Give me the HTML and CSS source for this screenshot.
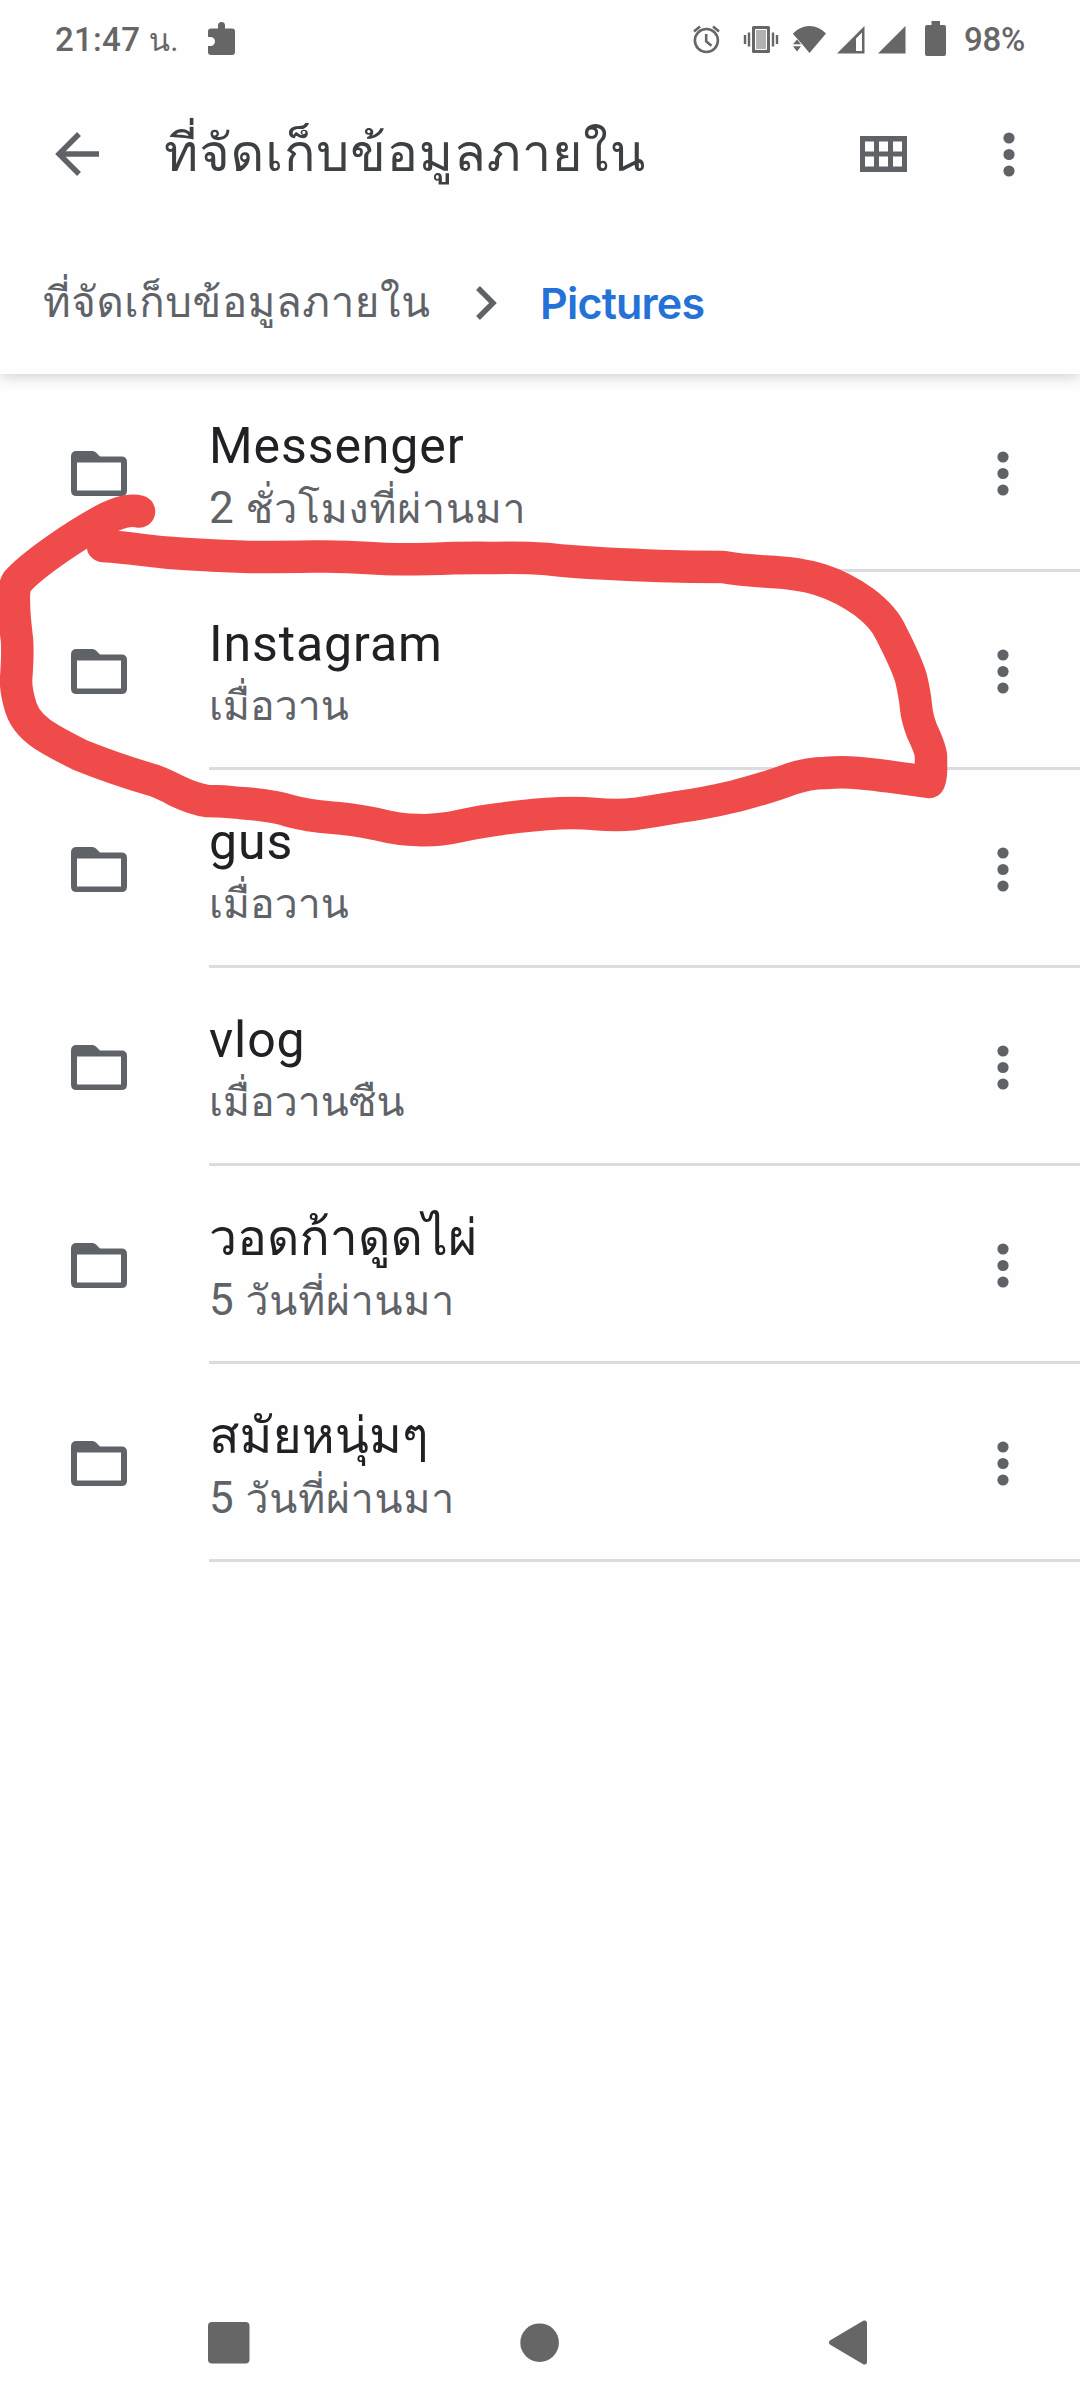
FILE: index.html
```html
<!DOCTYPE html>
<html lang="th">
<head>
<meta charset="utf-8">
<title>Pictures</title>
<link rel="stylesheet" href="styles.css">
</head>
<body>
<svg class="defs" width="0" height="0">
  <symbol id="folder" viewBox="0 0 56 45"><path fill-rule="evenodd" d="M5.500 0H21.500Q23.500 0 25 1.500L29 5.500H50.500Q56 5.500 56 11V39.500Q56 45 50.500 45H5.500Q0 45 0 39.500V5.500Q0 0 5.500 0ZM6 11.500V39.500H50V11.500Z"/></symbol>
  <symbol id="more" viewBox="0 0 12 45"><circle cx="6" cy="6" r="5.600"/><circle cx="6" cy="22.500" r="5.600"/><circle cx="6" cy="39" r="5.600"/></symbol>
</svg>
<div class="screen">
  <div class="status">
    <span class="clock">21:47 <span class="unit">น.</span></span>
    <svg class="puzzle" width="28" height="34" viewBox="0 0 28 34"><path d="M3 6.500H10V3.500A3.500 3.500 0 0 1 17 3.500V6.500H24Q27 6.500 27 9.500V30Q27 33 24 33H3Q0 33 0 30V24H2.500A4.500 4.500 0 0 0 2.500 15H0V9.500Q0 6.500 3 6.500Z"/></svg>
    <div class="status-right">
      <svg width="46" height="40" viewBox="686 18 46 40"><g fill="none" stroke="#666" stroke-width="2.600"><circle cx="706.400" cy="39.500" r="11.500"/><path d="M706.200 33V40.500L711.500 44.800M694 30.500L700 25.600M719 30.500L713 25.600"/></g></svg>
      <svg width="54" height="40" viewBox="732 18 54 40"><path d="M753.500 25H768.500Q770 25 770 26.500V50.500Q770 52 768.500 52H753.500Q752 52 752 50.500V26.500Q752 25 753.500 25Z"/><path fill="#b2b2b2" stroke="#fff" d="M755.500 28.500H766.500V48.500H755.500Z"/><path fill="none" stroke="#666" stroke-width="2.400" d="M745 34V43M749 31.500V45.500M773 31.500V45.500M777 34V43"/></svg>
      <svg width="46" height="40" viewBox="786 18 46 40"><path d="M793 32.500Q800 25 809.500 25T826 32.500L809.500 52L801.500 42.500L797.500 38L793.500 33.500ZM797 38.500L801 43.200H793ZM793 45.300H801L797 50.500Z"/></svg>
      <svg width="42" height="40" viewBox="832 18 42 40"><path fill-rule="evenodd" d="M837 52.500L864.500 25V52.500ZM856 37.500V50H862V31.500Z"/></svg>
      <svg width="41" height="40" viewBox="874 18 41 40"><path d="M878 52.500L905.500 25V52.500Z"/></svg>
      <svg width="49" height="40" viewBox="915 18 49 40"><path d="M931.500 20H940V24H944Q946 24 946 26V53Q946 55 944 55H927Q925 55 925 53V26Q925 24 927 24H931.500Z"/></svg>
      <span class="percent">98%</span>
    </div>
  </div>
  <header class="toolbar">
    <svg width="44" height="44" viewBox="0 0 44 44"><path fill="none" stroke="#5f6368" stroke-width="5.400" d="M44 22H4M24 2L4 22L24 42"/></svg>
    <h1 class="title">ที่จัดเก็บข้อมูลภายใน</h1>
    <svg class="grid" width="47" height="36" viewBox="0 0 47 36"><path fill-rule="evenodd" d="M0 0H47V36H0ZM5 5.500V15.500H14V5.500ZM19 5.500V15.500H28V5.500ZM33 5.500V15.500H42V5.500ZM5 20.500V30.500H14V20.500ZM19 20.500V30.500H28V20.500ZM33 20.500V30.500H42V20.500Z"/></svg>
    <svg width="12" height="45"><use href="#more"/></svg>
  </header>
  <nav class="crumbs">
    <span class="crumb">ที่จัดเก็บข้อมูลภายใน</span>
    <svg class="chevron" width="21" height="34" viewBox="0 0 21 34"><path fill="none" stroke="#5f6368" stroke-width="5.400" d="M2 2L17 17L2 32"/></svg>
    <span class="current">Pictures</span>
  </nav>
  <main class="list">
    <div class="row"><svg width="56" height="45"><use href="#folder"/></svg><div class="info"><div class="name">Messenger</div><div class="date ago"><span class="num">2</span> ชั่วโมงที่ผ่านมา</div></div><svg class="menu" width="12" height="45"><use href="#more"/></svg></div>
    <div class="row"><svg width="56" height="45"><use href="#folder"/></svg><div class="info"><div class="name">Instagram</div><div class="date">เมื่อวาน</div></div><svg class="menu" width="12" height="45"><use href="#more"/></svg></div>
    <div class="row"><svg width="56" height="45"><use href="#folder"/></svg><div class="info"><div class="name">gus</div><div class="date">เมื่อวาน</div></div><svg class="menu" width="12" height="45"><use href="#more"/></svg></div>
    <div class="row"><svg width="56" height="45"><use href="#folder"/></svg><div class="info"><div class="name">vlog</div><div class="date">เมื่อวานซืน</div></div><svg class="menu" width="12" height="45"><use href="#more"/></svg></div>
    <div class="row"><svg width="56" height="45"><use href="#folder"/></svg><div class="info"><div class="name thai">วอดก้าดูดไผ่</div><div class="date ago"><span class="num">5</span> วันที่ผ่านมา</div></div><svg class="menu" width="12" height="45"><use href="#more"/></svg></div>
    <div class="row"><svg width="56" height="45"><use href="#folder"/></svg><div class="info"><div class="name thai">สมัยหนุ่มๆ</div><div class="date ago"><span class="num">5</span> วันที่ผ่านมา</div></div><svg class="menu" width="12" height="45"><use href="#more"/></svg></div>
  </main>
  <footer class="navbar">
    <svg width="42" height="46" viewBox="0 0 42 46"><rect y="2" width="41.500" height="41.500" rx="4"/></svg>
    <svg width="40" height="46" viewBox="0 0 40 46"><circle cx="20.600" cy="22.700" r="19.300"/></svg>
    <svg width="40" height="46" viewBox="0 0 40 46"><path stroke="#666" stroke-width="5" stroke-linejoin="round" d="M3.500 22.500L36.500 3V42Z"/></svg>
  </footer>
  <svg class="scribble" width="1080" height="480" viewBox="0 450 1080 480"><path d="M103 546Q120 547 143 550Q165 553 186 554Q218 556 250 557Q286 557 314 556.500Q343 556 368 558Q393 560 428 559Q464 557.500 492 558Q520 557 547 559Q573 562 604 563.500Q634 565 660 566Q690 567 723 567Q740 570 765 571.500Q800 573 821 580Q843 587 864 602Q884 617 891 633Q906 662 911 678Q915 695 916 707Q917 718 922 731Q931 750 931 757L931 770Q931 777 929 782L896 777.500Q863 773 850 772.500Q838 772 825 773Q809 773 791 779Q770 787 736 796Q702 804 678 807Q655 811 635 814Q616 816 595 814Q574 812 547 814Q520 816 501 819Q483 821 460 826Q437 831 418 830Q400 830 376 824Q352 819 330 817.500Q309 816 290 811Q272 805 240 803Q224 801 207 801Q194 799 178 791.500Q158 781 149 779Q112 768 80 755Q60 745 50 739Q27 726 21 708Q16 692 16 680Q18 655 17 640Q14 615 14 605Q13 588 17 582Q27 570 57 549Q80 533 100 522Q125 508 139 511.500"/></svg>
</div>
</body>
</html>
```
FILE: styles.css
```css
body { margin: 0; background: #fefefe; font-family: Roboto, Loma, "Noto Sans Thai Looped", sans-serif; }
.defs { position: absolute; }
svg { display: block; flex: none; fill: #5f6368; }
.screen { position: relative; display: flex; flex-direction: column; width: 1080px; height: 2400px; overflow: hidden; background: #fefefe; }
.status { display: flex; align-items: center; height: 77px; padding: 0 54px 0 55px; color: #666; font-size: 33px; font-weight: 500; line-height: 40px; white-space: nowrap; }
.status svg, .navbar svg { fill: #666; }
.clock { width: 153px; padding-top: 3px; letter-spacing: 0.3px; }
.unit { font-size: 31px; font-weight: 400; }
.status-right { display: flex; align-items: center; margin-left: auto; }
.percent { width: 62px; padding-top: 3px; letter-spacing: -0.3px; }
.toolbar { display: flex; align-items: center; height: 154px; padding: 0 65px 0 55px; }
.title { flex: 1; margin: 0 0 0 65px; font-size: 52px; font-weight: 400; line-height: 80px; letter-spacing: 0.9px; color: #3c4043; white-space: nowrap; }
.grid { margin-right: 96px; }
.crumbs { display: flex; align-items: center; height: 143px; padding-left: 43px; font-size: 42px; line-height: 60px; color: #5f6368; white-space: nowrap; box-shadow: 0 2px 14px rgba(0, 0, 0, 0.2); clip-path: inset(0 0 -30px 0); }
.crumb { width: 433px; letter-spacing: 0.6px; }
.current { margin-left: 43px; color: #2472d8; font-family: Inter, sans-serif; font-size: 43px; font-weight: 600; letter-spacing: -0.8px; }
.list { display: flex; flex-direction: column; }
.row { position: relative; display: flex; align-items: center; height: 198px; padding-left: 71px; }
.info { flex: 1; display: flex; flex-direction: column; justify-content: center; box-sizing: border-box; height: 198px; margin-left: 82px; padding-top: 11px; border-bottom: 3px solid #dadce0; white-space: nowrap; }
.name { font-size: 50px; line-height: 62px; letter-spacing: 0.9px; color: #202124; }
.thai { letter-spacing: 0; }
.date { font-size: 41px; line-height: 62px; color: #5f6368; }
.ago { letter-spacing: 0.8px; }
.num { font-size: 44px; }
.menu { position: absolute; right: 71px; }
.navbar { display: flex; align-items: center; justify-content: space-between; height: 115px; margin-top: auto; padding: 0 212px 0 208px; }
.scribble { position: absolute; left: 0; top: 450px; fill: none; stroke: #f04b4b; stroke-width: 32.500px; stroke-linecap: round; stroke-linejoin: round; }
```
